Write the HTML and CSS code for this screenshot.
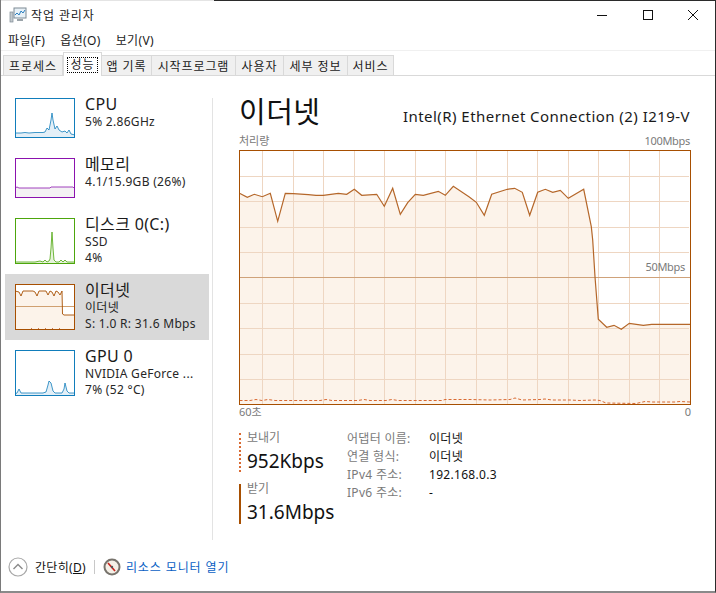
FILE: index.html
```html
<!DOCTYPE html>
<html lang="ko">
<head>
    <meta charset="UTF-8">
    <title>작업 관리자</title>
    <link rel="stylesheet" href="styles.css">
</head>
<body>
<div class="window">

    <div class="titlebar">
        <svg class="app_icon" width="18" height="16" viewBox="0 0 18 16">
            <rect x="5" y="1" width="12" height="10" fill="#e8f1f7" stroke="#7d8a94"/>
            <polyline points="6,8 8,6 10,8 12,4 14,6 16,3" fill="none" stroke="#2a7fc0"/>
            <rect x="1" y="5" width="3" height="10" fill="#c3c9cd" stroke="#7d8a94" stroke-width="0.7"/>
            <rect x="8" y="12" width="6" height="2" fill="#9aa3a9"/>
        </svg>
        <span class="title">작업 관리자</span>
        <div class="win_buttons">
            <svg width="16" height="16" viewBox="0 0 16 16"><line x1="3" y1="8.5" x2="13" y2="8.5" stroke="#111"/></svg>
            <svg width="16" height="16" viewBox="0 0 16 16"><rect x="3.5" y="3.5" width="9" height="9" fill="none" stroke="#111"/></svg>
            <svg width="16" height="16" viewBox="0 0 16 16"><path d="M3 3 L13 13 M13 3 L3 13" stroke="#111" fill="none"/></svg>
        </div>
    </div>

    <div class="menubar">
        <span>파일(F)</span>
        <span>옵션(O)</span>
        <span>보기(V)</span>
    </div>

    <div class="tabs">
        <span class="tab t1">프로세스</span>
        <span class="tab active t2"><span class="focus">성능</span></span>
        <span class="tab t3">앱 기록</span>
        <span class="tab t4">시작프로그램</span>
        <span class="tab t5">사용자</span>
        <span class="tab t6">세부 정보</span>
        <span class="tab t7">서비스</span>
    </div>

    <div class="content">
        <div class="sidebar">
            <div class="item">
                <svg class="spark short" viewBox="0 0 60 40" preserveAspectRatio="none">
                    <rect x="0.5" y="0.5" width="59" height="39" fill="#fff"/>
                    <polygon points="0,35 6,35 10,34.5 14,35 20,34.5 28,34.5 30,34 32,30 34,32 36,22 37,15 38,22 40,31 42,28 44,32 47,34 50,33 52,35 54,32 56,36 60,37 60,40 0,40" fill="#e3eff7"/>
                    <polyline points="0,35 6,35 10,34.5 14,35 20,34.5 28,34.5 30,34 32,30 34,32 36,22 37,15 38,22 40,31 42,28 44,32 47,34 50,33 52,35 54,32 56,36 60,37" fill="none" stroke="#117dbb" stroke-width="0.8"/>
                    <rect x="0.5" y="0.5" width="59" height="39" fill="none" stroke="#117dbb"/>
                </svg>
                <div class="info">
                    <div class="name">CPU</div>
                    <div class="sub">5% 2.86GHz</div>
                </div>
            </div>
            <div class="item">
                <svg class="spark short" viewBox="0 0 60 40" preserveAspectRatio="none">
                    <rect x="0.5" y="0.5" width="59" height="39" fill="#fff"/>
                    <polygon points="0,30 2,29 4,30 35,30 36,29 50,29 58,29 59,30 60,29 60,40 0,40" fill="#f4f2f4"/>
                    <polyline points="0,30 2,29 4,30 35,30 36,29 50,29 58,29 59,30 60,29" fill="none" stroke="#8b12ae" stroke-width="0.8"/>
                    <rect x="0.5" y="0.5" width="59" height="39" fill="none" stroke="#8b12ae"/>
                </svg>
                <div class="info">
                    <div class="name">메모리</div>
                    <div class="sub">4.1/15.9GB (26%)</div>
                </div>
            </div>
            <div class="item">
                <svg class="spark" viewBox="0 0 60 46" preserveAspectRatio="none">
                    <rect x="0.5" y="0.5" width="59" height="45" fill="#fff"/>
                    <polygon points="0,44 10,44 16,44 20,44 25,43 28,44 30,42 32,44 34,43 35,41 36,30 37,14 38,30 39,42 41,44 44,44 46,42 48,44 50,42 52,44 60,44 60,46 0,46" fill="#e7f3dc"/>
                    <polyline points="0,44 10,44 16,44 20,44 25,43 28,44 30,42 32,44 34,43 35,41 36,30 37,14 38,30 39,42 41,44 44,44 46,42 48,44 50,42 52,44 60,44" fill="none" stroke="#4da60c" stroke-width="0.8"/>
                    <rect x="0.5" y="0.5" width="59" height="45" fill="none" stroke="#4da60c"/>
                </svg>
                <div class="info">
                    <div class="name">디스크 0(C:)</div>
                    <div class="sub">SSD</div>
                    <div class="sub">4%</div>
                </div>
            </div>
            <div class="item selected">
                <svg class="spark" viewBox="0 0 60 46" preserveAspectRatio="none">
                    <rect x="0.5" y="0.5" width="59" height="45" fill="#fff"/>
                    <polygon points="0,7 4,8 6,12 8,7 18,7 20,8 22,12 24,7 28,7 31,7 33,11 35,7 37,8 39,12 41,7 43,8 45,11 47,7 47.5,30 49,31 60,31 60,46 0,46" fill="#fcf3ea"/>
                    <line x1="0" y1="22.5" x2="60" y2="22.5" stroke="#d0a070"/>
                    <polyline points="0,7 4,8 6,12 8,7 18,7 20,8 22,12 24,7 28,7 31,7 33,11 35,7 37,8 39,12 41,7 43,8 45,11 47,7 47.5,30 49,31 60,31" fill="none" stroke="#a74f01" stroke-width="0.9"/>
                    <line x1="16" y1="44.5" x2="48" y2="44.5" stroke="#c97a50" stroke-dasharray="1 6"/>
                    <rect x="0.5" y="0.5" width="59" height="45" fill="none" stroke="#a74f01"/>
                </svg>
                <div class="info">
                    <div class="name">이더넷</div>
                    <div class="sub">이더넷</div>
                    <div class="sub">S: 1.0 R: 31.6 Mbps</div>
                </div>
            </div>
            <div class="item">
                <svg class="spark" viewBox="0 0 60 46" preserveAspectRatio="none">
                    <rect x="0.5" y="0.5" width="59" height="45" fill="#fff"/>
                    <polygon points="0,44 2,43 4,39 6,43 20,43 28,43 31,42 33,35 34,31 36,33 38,41 40,43 47,43 49,39 50,33 52,41 54,43 60,43 60,46 0,46" fill="#e3eff7"/>
                    <polyline points="0,44 2,43 4,39 6,43 20,43 28,43 31,42 33,35 34,31 36,33 38,41 40,43 47,43 49,39 50,33 52,41 54,43 60,43" fill="none" stroke="#117dbb" stroke-width="0.8"/>
                    <rect x="0.5" y="0.5" width="59" height="45" fill="none" stroke="#117dbb"/>
                </svg>
                <div class="info">
                    <div class="name">GPU 0</div>
                    <div class="sub">NVIDIA GeForce ...</div>
                    <div class="sub">7% (52 °C)</div>
                </div>
            </div>
        </div>
        <div class="vsep"></div>

        <div class="main">
            <div class="head">
                <span class="big">이더넷</span>
                <span class="device">Intel(R) Ethernet Connection (2) I219-V</span>
            </div>
            <div class="axis top_axis"><span>처리량</span><span class="mbps">100Mbps</span></div>
            <div class="chart">
                <svg width="452" height="255" viewBox="239 150 452 255">
                    <!-- 좌표는 창 기준 -->
                    <polygon fill="#fcf3ea" points="239.5,193.3 247.3,197.3 254.3,194.3 262.3,196.7 270.3,193.3 277.7,221.3 285.3,193.3 293.3,193.7 308.3,194.7 316,195.3 323.3,195.3 338.3,193.3 346.7,194.3 354.3,189.3 361.7,195.3 376.7,194.3 384.3,206.3 392.7,188.3 400.3,214.3 407.7,202.7 415.3,194.3 423.3,195.3 438.3,191.3 445.3,195.3 453.3,186.3 469.3,197 476.3,202.3 484.3,215.3 491.7,194.3 507.3,189.3 514.7,188.3 522.3,192.3 529.7,215.3 537.7,192.3 545.3,189.3 552.7,192.3 560.3,190.3 568.3,198.3 583.7,189.3 591.3,226.7 592.7,240 595,276.7 598.3,319.3 606.7,327.3 614,325.3 621.3,329.3 629.3,323.3 643.3,325.3 651.7,324.3 690,324.3 690,404 239.5,404"/>
                    <path class="grid" d="M262.5 150V404M293.5 150V404M323.5 150V404M354.5 150V404M384.5 150V404M415.5 150V404M445.5 150V404M476.5 150V404M507.5 150V404M537.5 150V404M568.5 150V404M598.5 150V404M629.5 150V404M659.5 150V404M239 176.5H689M239 201.5H689M239 227.5H689M239 252.5H689M239 303.5H689M239 328.5H689M239 354.5H689M239 379.5H689"/>
                    <line x1="239" y1="277.5" x2="690" y2="277.5" stroke="#cfa27a"/>
                    <polyline class="recv_line" points="239.5,193.3 247.3,197.3 254.3,194.3 262.3,196.7 270.3,193.3 277.7,221.3 285.3,193.3 293.3,193.7 308.3,194.7 316,195.3 323.3,195.3 338.3,193.3 346.7,194.3 354.3,189.3 361.7,195.3 376.7,194.3 384.3,206.3 392.7,188.3 400.3,214.3 407.7,202.7 415.3,194.3 423.3,195.3 438.3,191.3 445.3,195.3 453.3,186.3 469.3,197 476.3,202.3 484.3,215.3 491.7,194.3 507.3,189.3 514.7,188.3 522.3,192.3 529.7,215.3 537.7,192.3 545.3,189.3 552.7,192.3 560.3,190.3 568.3,198.3 583.7,189.3 591.3,226.7 592.7,240 595,276.7 598.3,319.3 606.7,327.3 614,325.3 621.3,329.3 629.3,323.3 643.3,325.3 651.7,324.3 690,324.3"/>
                    <polyline class="send_line" points="239.5,400.5 250,400.5 256,399.5 262,400.5 268,399.5 275,400.5 320,400.5 326,399.5 332,400.5 358,400.5 364,399.5 370,400.5 386,400.5 392,399.5 398,400.5 442,400.5 445,399.5 470,399.5 490,400 510,399.5 515,398 522,400 540,399.5 545,399 552,400 570,400 580,400.5 595,400 600,400.5 606,403 636,403.5 645,401.5 652,402 675,402 680,401.5 690,402"/>
                    <rect x="239.5" y="150.5" width="451" height="254" fill="none" stroke="#a74f01"/>
                </svg>
                <span class="mid_label mbps">50Mbps</span>
            </div>
            <div class="axis bottom_axis"><span>60초</span><span>0</span></div>

            <div class="stats">
                <div class="rates">
                    <div class="rate send">
                        <div class="rate_label">보내기</div>
                        <div class="rate_value">952Kbps</div>
                    </div>
                    <div class="rate recv">
                        <div class="rate_label">받기</div>
                        <div class="rate_value">31.6Mbps</div>
                    </div>
                </div>
                <div class="details">
                    <span class="key">어댑터 이름:</span><span class="val">이더넷</span>
                    <span class="key">연결 형식:</span><span class="val">이더넷</span>
                    <span class="key">IPv4 주소:</span><span class="val">192.168.0.3</span>
                    <span class="key">IPv6 주소:</span><span class="val">-</span>
                </div>
            </div>
        </div>
    </div>

    <div class="footer">
        <svg width="20" height="20" viewBox="0 0 20 20">
            <circle cx="10" cy="10" r="9" fill="#fff" stroke="#a8a8a8" stroke-width="1.2"/>
            <polyline points="5.5,12 10,7.5 14.5,12" fill="none" stroke="#8a8a8a" stroke-width="1.4"/>
        </svg>
        <span class="less">간단히(<u>D</u>)</span>
        <span class="foot_sep"></span>
        <svg width="18" height="18" viewBox="0 0 18 18">
            <circle cx="9" cy="9" r="7.5" fill="#f4efe6" stroke="#77736c" stroke-width="2"/>
            <path d="M5 5 L12 13" stroke="#c8231c" stroke-width="1.6"/>
            <circle cx="9" cy="9" r="1.2" fill="#555"/>
        </svg>
        <span class="monitor_link">리소스 모니터 열기</span>
    </div>

</div>
</body>
</html>
```

FILE: styles.css
```css
html, body {
  margin: 0;
  padding: 0;
  background: #fff;
}

body {
  font-family: "Noto Sans", "Noto Sans CJK KR", sans-serif;
  font-size: 12px;
  color: #1a1a1a;
}

.window {
  width: 716px;
  height: 593px;
  box-sizing: border-box;
  border-left: 1px solid #7a7a7a;
  border-right: 1px solid #2b2b2b;
  border-bottom: 2px solid #8a8a8a;
  display: flex;
  flex-direction: column;
  overflow: hidden;
}

/* title bar */
.titlebar {
  height: 30px;
  flex: none;
  display: flex;
  align-items: center;
  padding-left: 8px;
  background: linear-gradient(to right, #e4e4e4 213px, #2b2b2b 213px) top / 100% 1px no-repeat;
}

.title {
  margin-left: 4px;
  letter-spacing: 0.9px;
  color: #222;
}

.win_buttons {
  margin-left: auto;
  display: flex;
  gap: 29.5px;
  padding-right: 14px;
}

.win_buttons svg {
  display: block;
}

/* menu */
.menubar {
  height: 20px;
  flex: none;
  display: flex;
  align-items: center;
  padding-left: 7px;
  gap: 15px;
  letter-spacing: 0.35px;
  border-bottom: 1px solid #f0f0f0;
}

/* tabs */
.tabs {
  height: 24px;
  flex: none;
  display: flex;
  align-items: flex-end;
  padding-left: 2px;
  border-bottom: 1px solid #d9d9d9;
}

.tab {
  box-sizing: border-box;
  height: 20px;
  display: flex;
  align-items: center;
  justify-content: center;
  background: #f0f0f0;
  border: 1px solid #d9d9d9;
  border-bottom: none;
  border-left: none;
  letter-spacing: 0.9px;
}

.t1 { width: 60px; border-left: 1px solid #d9d9d9; }
.t3 { width: 50px; }
.t4 { width: 84px; }
.t5 { width: 48px; }
.t6 { width: 64px; }
.t7 { width: 46px; }

.tab.active {
  width: 39px;
  height: 24px;
  margin-bottom: -1px;
  background: #fff;
  border: 1px solid #d9d9d9;
  border-bottom: none;
}

.focus {
  display: block;
  width: 31px;
  height: 16px;
  line-height: 14px;
  text-align: center;
  box-sizing: border-box;
  border: 1px dotted #000;
}

/* content */
.content {
  flex: 1;
  display: flex;
  min-height: 0;
}

.sidebar {
  width: 204px;
  flex: none;
  margin-left: 4px;
  margin-top: 12px;
}

.vsep {
  width: 1px;
  height: 442px;
  flex: none;
  margin-left: 3px;
  margin-top: 22px;
  background: #e3e3e3;
}

.item {
  display: flex;
  gap: 10px;
  padding: 10px;
  box-sizing: border-box;
}

.selected {
  background: #d9d9d9;
}

.spark {
  width: 60px;
  height: 46px;
  flex: none;
  display: block;
}

.spark.short {
  height: 40px;
}

.info {
  margin-top: -3px;
  margin-bottom: -6px;
  white-space: nowrap;
}

.name {
  font-size: 16px;
  line-height: 19px;
  letter-spacing: 0.35px;
}

.sub {
  font-size: 12px;
  line-height: 16px;
  letter-spacing: 0.3px;
  color: #262626;
}

.main {
  width: 452px;
  margin-left: 26px;
  flex: none;
}

.head {
  height: 42px;
  margin-top: 13px;
  display: flex;
  justify-content: space-between;
  align-items: flex-end;
}

.big {
  font-size: 29px;
  line-height: 42px;
  margin-bottom: -2px;
  color: #111;
  letter-spacing: 0.5px;
}

.device {
  font-size: 15px;
  line-height: 30px;
  letter-spacing: 0.45px;
  color: #1a1a1a;
  white-space: nowrap;
  padding-right: 1px;
}

.axis {
  display: flex;
  justify-content: space-between;
  font-size: 11px;
  color: #7a7a7a;
}

.mbps {
  letter-spacing: -0.3px;
  padding-right: 1px;
}

.top_axis {
  height: 17px;
  line-height: 15px;
  margin-top: 2px;
}

.bottom_axis {
  height: 17px;
  line-height: 13px;
}

.chart {
  position: relative;
  height: 255px;
}

.chart svg {
  display: block;
}

.grid {
  fill: none;
  stroke: #eed6c2;
}

.recv_line {
  fill: none;
  stroke: #b5672a;
  stroke-width: 1.2;
}

.send_line {
  fill: none;
  stroke: #d96a32;
  stroke-dasharray: 3 2;
}

.mid_label {
  position: absolute;
  right: 5px;
  top: 109px;
  font-size: 11px;
  color: #7a7a7a;
}

/* stats under the chart */
.stats {
  display: flex;
  margin-top: 11px;
}

.rates {
  width: 108px;
  flex: none;
}

.rate {
  display: flow-root;
  padding-left: 6px;
  height: 40px;
  border-left: 2px solid #a74f01;
}

.rate.send {
  height: 39px;
  margin-bottom: 12px;
  border-left: 2px dotted #d96a32;
}

.rate_label {
  font-size: 12px;
  line-height: 16px;
  margin-top: -3px;
  color: #7a7a7a;
}

.rate_value {
  font-size: 19px;
  line-height: 26px;
  margin-top: 2px;
  color: #111;
}

.details {
  display: grid;
  grid-template-columns: 82px auto;
  grid-auto-rows: 18px;
  align-content: start;
  margin-top: -3px;
  line-height: 18px;
}

.key {
  color: #7a7a7a;
  letter-spacing: 0.3px;
}

.val {
  color: #111;
  letter-spacing: 0.3px;
}

/* footer */
.footer {
  flex: none;
  display: flex;
  align-items: center;
  padding-left: 7px;
  height: 48px;
}

.less {
  margin-left: 7px;
  color: #111;
  letter-spacing: 0.3px;
}

.foot_sep {
  width: 1px;
  height: 14px;
  background: #c8c8c8;
  margin: 0 8px 0 8px;
}

.monitor_link {
  margin-left: 5px;
  color: #0a5fc4;
  letter-spacing: 0.9px;
}
```
